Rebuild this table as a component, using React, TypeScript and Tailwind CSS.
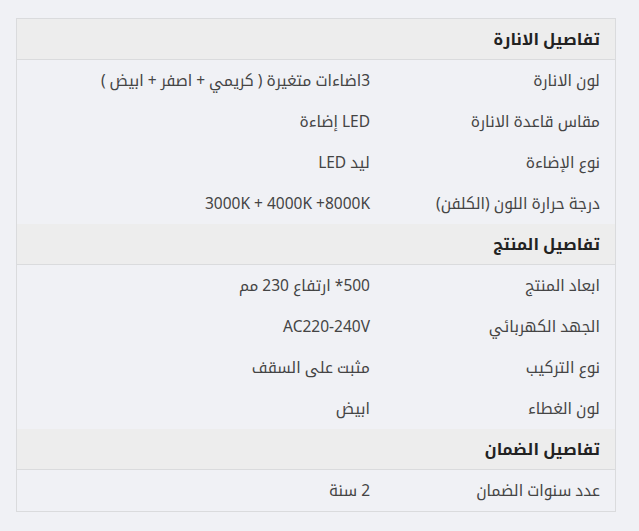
const sections = [
  {
    title: "تفاصيل الانارة",
    rows: [
      ["لون الانارة", "3اضاءات متغيرة ( كريمي + اصفر + ابيض )"],
      ["مقاس قاعدة الانارة", "LED إضاءة"],
      ["نوع الإضاءة", "ليد LED"],
      ["درجة حرارة اللون (الكلفن)", "3000K + 4000K +8000K"],
    ],
  },
  {
    title: "تفاصيل المنتج",
    rows: [
      ["ابعاد المنتج", "500* ارتفاع 230 مم"],
      ["الجهد الكهربائي", "AC220-240V"],
      ["نوع التركيب", "مثبت على السقف"],
      ["لون الغطاء", "ابيض"],
    ],
  },
  {
    title: "تفاصيل الضمان",
    rows: [["عدد سنوات الضمان", "2 سنة"]],
  },
]

export default function App() {
  return (
    <div
      className="min-h-[531px] w-full bg-[#f0f1f5] pt-[18px] pl-4"
      style={{ fontFamily: '"Noto Sans", "Noto Kufi Arabic", "Noto Sans Arabic", "DejaVu Sans", sans-serif' }}
    >
      <div dir="rtl" className="w-[600px] border border-[#dadbdd] text-[15.5px] text-[#444]">
        {sections.map((section) => (
          <div key={section.title}>
            <div className="flex h-[41px] items-center border-b border-[#dadbdd] bg-[#ededed] px-[15px] text-[16px] font-bold text-[#222]">
              {section.title}
            </div>
            {section.rows.map(([label, value]) => (
              <div key={label} className="flex h-[41px] items-center">
                <div className="w-[230px] shrink-0 px-[15px]">{label}</div>
                <div className="flex-1 px-[15px]">{value}</div>
              </div>
            ))}
          </div>
        ))}
      </div>
    </div>
  )
}
